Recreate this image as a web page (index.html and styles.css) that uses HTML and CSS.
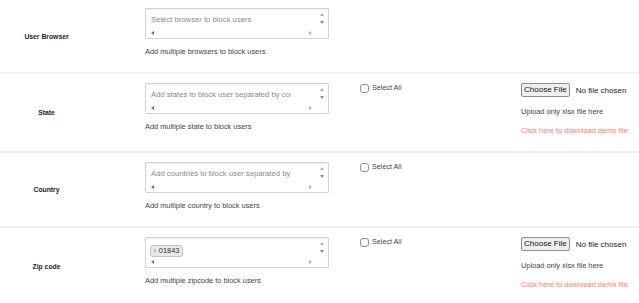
FILE: index.html
```html
<!DOCTYPE html>
<html lang="en">
<head>
<meta charset="utf-8">
<title>Block users</title>
<link rel="stylesheet" href="styles.css">
</head>
<body>
<div class="form">
  <div class="row first">
    <div class="label">User Browser</div>
    <div class="cell field">
      <div class="ta">
        <div class="ta-text"><span class="ph">Select browser to block users</span></div>
        <div class="vbar"><i class="up"></i><i class="down"></i></div>
        <div class="hbar"><i class="left"></i><i class="right"></i></div>
        <div class="corner"></div>
      </div>
      <p class="help">Add multiple browsers to block users</p>
    </div>
  </div>

  <div class="row">
    <div class="label">State</div>
    <div class="cell field">
      <div class="ta">
        <div class="ta-text"><span class="ph">Add states to block user separated by comma</span></div>
        <div class="vbar"><i class="up"></i><i class="down"></i></div>
        <div class="hbar"><i class="left"></i><i class="right"></i></div>
        <div class="corner"></div>
      </div>
      <p class="help">Add multiple state to block users</p>
    </div>
    <div class="cell check">
      <label class="sel"><span class="cb"></span>Select All</label>
    </div>
    <div class="cell file">
      <div class="file-input"><span class="btn">Choose File</span><span class="nofile">No file chosen</span></div>
      <p class="note">Upload only xlsx file here</p>
      <a class="demo" href="#">Click here to download demo file</a>
    </div>
  </div>

  <div class="row">
    <div class="label">Country</div>
    <div class="cell field">
      <div class="ta">
        <div class="ta-text"><span class="ph">Add countries to block user separated by comma</span></div>
        <div class="vbar"><i class="up"></i><i class="down"></i></div>
        <div class="hbar"><i class="left"></i><i class="right"></i></div>
        <div class="corner"></div>
      </div>
      <p class="help">Add multiple country to block users</p>
    </div>
    <div class="cell check">
      <label class="sel"><span class="cb"></span>Select All</label>
    </div>
  </div>

  <div class="row">
    <div class="label">Zip code</div>
    <div class="cell field">
      <div class="ta">
        <div class="ta-text chips"><span class="chip"><span class="x">×</span>01843</span></div>
        <div class="vbar"><i class="up"></i><i class="down"></i></div>
        <div class="hbar"><i class="left"></i><i class="right"></i></div>
        <div class="corner"></div>
      </div>
      <p class="help">Add multiple zipcode to block users</p>
    </div>
    <div class="cell check">
      <label class="sel"><span class="cb"></span>Select All</label>
    </div>
    <div class="cell file">
      <div class="file-input"><span class="btn">Choose File</span><span class="nofile">No file chosen</span></div>
      <p class="note">Upload only xlsx file here</p>
      <a class="demo" href="#">Click here to download demo file</a>
    </div>
  </div>
</div>
</body>
</html>
```

FILE: styles.css
```css
* { box-sizing: border-box; }

html, body {
  margin: 0;
  padding: 0;
  background: #ffffff;
  font-family: "Liberation Sans", Arial, sans-serif;
  color: #3c434a;
  overflow: hidden;
}

.form {
  width: 639px;
}

.row {
  display: flex;
  align-items: flex-start;
  border-bottom: 2px solid #f0f0f1;
}

.label {
  width: 93px;
  align-self: stretch;
  display: flex;
  align-items: center;
  justify-content: center;
  font-size: 6.8px;
  font-weight: bold;
  color: #1d2327;
  margin-right: 52px;
}

.cell {
  padding: 9px 0 15px;
}

.row.first .cell {
  padding-top: 8px;
}

.field {
  width: 184px;
}

/* mock textarea with classic scrollbars */
.ta {
  width: 184px;
  height: 31px;
  border: 1px solid #d3d3d6;
  border-radius: 1px;
  box-shadow: inset 0 1px 2px rgba(0, 0, 0, 0.07);
  display: grid;
  grid-template-columns: 1fr 12px;
  grid-template-rows: 1fr 10px;
  background: #fff;
}

.ta-text {
  padding: 6px 0 0 5px;
  overflow: hidden;
}

.ph {
  display: block;
  width: 140px;
  overflow: hidden;
  white-space: nowrap;
  font-size: 7.7px;
  line-height: 10px;
  color: #8a8a8a;
}

.chips {
  padding: 1px 0 0 4px;
}

.chip {
  display: inline-flex;
  align-items: center;
  height: 12px;
  padding: 0 3px 0 2px;
  background: #e8e8e8;
  border: 1px solid #c4c4c4;
  border-radius: 3px;
  font-size: 7.4px;
  color: #2c3338;
}

.chip .x {
  color: #a0a0a0;
  margin-right: 2px;
  font-size: 6.5px;
}

.vbar {
  display: flex;
  flex-direction: column;
  align-items: center;
  padding-top: 4px;
  gap: 5px;
}

.hbar {
  display: flex;
  justify-content: space-between;
  align-items: center;
  padding: 0 4px 0 5px;
}

.up, .down, .left, .right {
  display: block;
  width: 0;
  height: 0;
}

.up {
  border-left: 2.5px solid transparent;
  border-right: 2.5px solid transparent;
  border-bottom: 3px solid #b0b0b0;
}

.down {
  border-left: 2.5px solid transparent;
  border-right: 2.5px solid transparent;
  border-top: 3px solid #8a8a8a;
}

.left {
  border-top: 2.5px solid transparent;
  border-bottom: 2.5px solid transparent;
  border-right: 3px solid #707070;
}

.right {
  border-top: 2.5px solid transparent;
  border-bottom: 2.5px solid transparent;
  border-left: 3px solid #b0b0b0;
}

.help {
  margin: 8px 0 0;
  font-size: 7.4px;
  line-height: 10px;
  color: #3c434a;
  white-space: nowrap;
}

.check {
  width: 161px;
  margin-left: 31px;
}

.sel {
  display: flex;
  align-items: center;
  font-size: 7.2px;
  line-height: 10px;
  color: #3c434a;
}

.cb {
  width: 9px;
  height: 9px;
  border: 1px solid #8c8f94;
  border-radius: 3px;
  background: #fff;
  margin-right: 3px;
}

.file {
  flex: 1;
}

.file-input {
  display: flex;
  align-items: center;
  font-size: 8px;
  color: #222;
}

.btn {
  display: inline-block;
  height: 14px;
  line-height: 12px;
  padding: 0 2px;
  background: #efefef;
  border: 1px solid #8f8f8f;
  border-radius: 2px;
  color: #111;
  margin-right: 6px;
}

.note {
  margin: 10px 0 0;
  font-size: 7.4px;
  line-height: 10px;
  color: #3c434a;
}

.demo {
  display: block;
  margin-top: 9px;
  font-size: 7.4px;
  line-height: 10px;
  color: #ff7b7b;
  text-decoration: none;
}
```
